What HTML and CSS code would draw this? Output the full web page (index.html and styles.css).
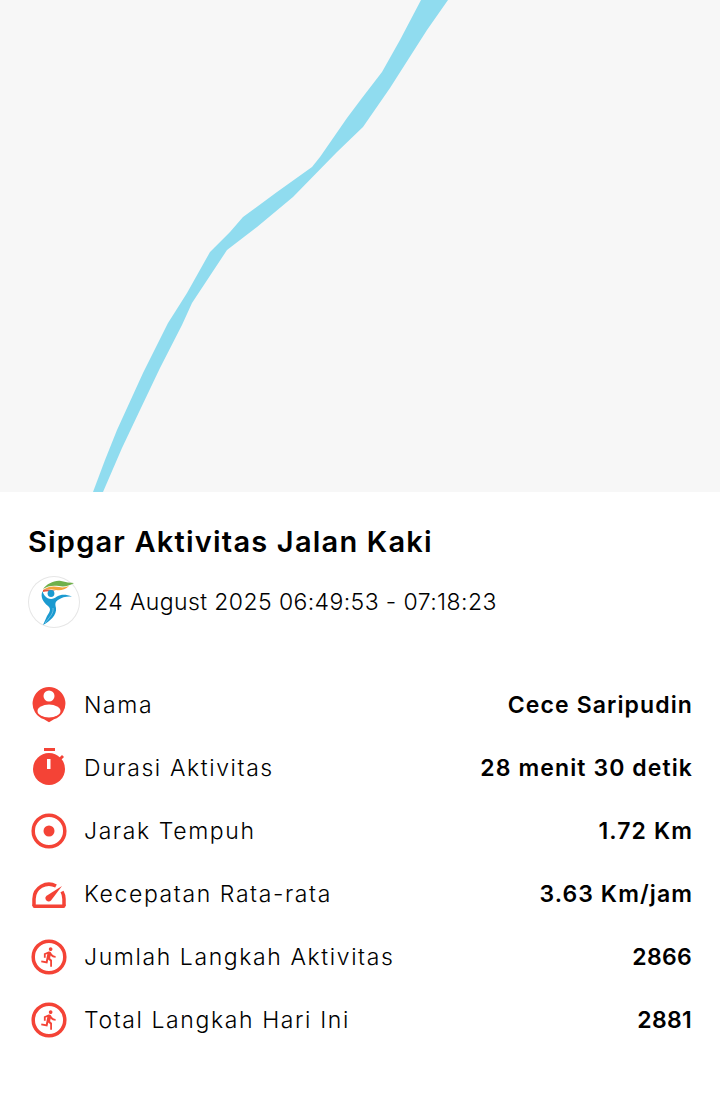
FILE: index.html
```html
<!DOCTYPE html>
<html lang="en">
<head>
    <meta charset="UTF-8">
    <meta name="viewport" content="width=device-width, initial-scale=1.0">
    <title>Sipgar Aktivitas Jalan Kaki</title>
    <link rel="stylesheet" href="styles.css">
</head>
<body>
    <div class="map">
        <svg class="route" width="720" height="492" viewBox="0 0 720 492">
            <polygon points="421,0 400,40 382,72 362,98 347,118 320,157 312,167 277,192 243,217 230,232 215,247 210,252 187,293 175,312 168,323 143,373 117,430 105,460 93,492 103,492 122,448 140,410 160,368 182,325 192,303 227,250 257,227 293,197 337,152 363,127 390,88 397,77 427,30 448,0"/>
        </svg>
    </div>

    <div class="panel">
        <h1 class="title">Sipgar Aktivitas Jalan Kaki</h1>

        <div class="meta">
            <div class="logo">
                <svg width="52" height="52" viewBox="0 0 52 52">
                    <path fill="#6fb04a" d="M15 13C19 8 26 4 33 5C38 6 42 7 46 7C41 10 36 11 31 10C25 9 19 10 15 13z"/>
                    <path fill="#f2a33a" d="M15 14C20 10 26 10 31 11C35 12 38 11 41 10C37 14 32 15 28 14C23 13 19 13 15 14z"/>
                    <path fill="#e4573d" d="M15 14C19 13 24 14 28 15C23 15 18 15 15 16z"/>
                    <circle cx="23" cy="17.500" r="3.400" fill="#1b9ad0"/>
                    <path fill="#1b9ad0" d="M14.500 15C12 21 15 26 20 30C24 33 21 37 19 40L15 49C22 45 29 39 28 32C27 28 27 26 30 24C34 21 39 20 44 20.500C38 18 33 18 29 20.500C25 24 20 23.500 17 20C15.500 18 15 17 14.500 15z"/>
                    <path fill="none" stroke="#8fd0ea" stroke-width=".7" d="M17 47C21 42 26 37 25 32"/>
                </svg>
            </div>
            <span class="date">24 August 2025 06:49:53 - 07:18:23</span>
        </div>

        <div class="stats">
            <div class="row">
                <svg class="icon" width="36" height="36" viewBox="0 0 36 36">
                    <path fill="#f44336" d="M18 0a16.500 16.500 0 0 1 5 32.200l-5 3-5-3A16.500 16.500 0 0 1 18 0z"/>
                    <circle cx="18" cy="9" r="5.500" fill="#fff"/>
                    <ellipse cx="18" cy="24" rx="11.500" ry="6.500" fill="#fff"/>
                </svg>
                <span class="label">Nama</span>
                <span class="value">Cece Saripudin</span>
            </div>
            <div class="row">
                <svg class="icon" width="36" height="40" viewBox="0 0 36 40">
                    <rect x="13" y="0" width="11" height="3" fill="#f44336"/>
                    <circle cx="18" cy="21" r="16" fill="#f44336"/>
                    <path d="M28 10l3-3 2 2-3 3z" fill="#f44336"/>
                    <rect x="16" y="11" width="3.500" height="10" fill="#fff"/>
                </svg>
                <span class="label">Durasi Aktivitas</span>
                <span class="value">28 menit 30 detik</span>
            </div>
            <div class="row">
                <svg class="icon" width="36" height="36" viewBox="0 0 36 36">
                    <circle cx="18" cy="18" r="15.800" fill="none" stroke="#f44336" stroke-width="3.500"/>
                    <circle cx="18" cy="18" r="5.500" fill="#f44336"/>
                </svg>
                <span class="label">Jarak Tempuh</span>
                <span class="value">1.72 Km</span>
            </div>
            <div class="row">
                <svg class="icon" width="36" height="28" viewBox="0 0 36 28">
                    <path fill="none" stroke="#f44336" stroke-width="3.500" d="M3 26v-7A15 15 0 0 1 25 6M31 11.500A15 15 0 0 1 33 19v7"/>
                    <path fill="#f44336" d="M1.500 24.500h33V26a2 2 0 0 1-2 2h-29a2 2 0 0 1-2-2z"/>
                    <path fill="#f44336" d="M31 6L20 20.500a3.300 3.300 0 0 1-5-.5 3.300 3.300 0 0 1 1-4.500z"/>
                </svg>
                <span class="label">Kecepatan Rata-rata</span>
                <span class="value">3.63 Km/jam</span>
            </div>
            <div class="row">
                <svg class="icon" width="36" height="36" viewBox="0 0 36 36">
                    <circle cx="18" cy="18" r="15.800" fill="none" stroke="#f44336" stroke-width="3.500"/>
                    <path transform="translate(7.500 7) scale(.9)" fill="#f44336" d="M13.490 5.480c1.100 0 2-.9 2-2s-.9-2-2-2-2 .9-2 2 .9 2 2 2zm-3.600 13.900l1-4.400 2.100 2v6h2v-7.500l-2.100-2 .6-3c1.300 1.500 3.300 2.500 5.500 2.500v-2c-1.900 0-3.500-1-4.300-2.400l-1-1.600c-.4-.6-1-1-1.700-1-.3 0-.5.1-.8.1l-5.200 2.200v4.700h2v-3.400l1.800-.7-1.600 8.100-4.900-1-.4 2 7 1.400z"/>
                </svg>
                <span class="label">Jumlah Langkah Aktivitas</span>
                <span class="value number">2866</span>
            </div>
            <div class="row">
                <svg class="icon" width="36" height="36" viewBox="0 0 36 36">
                    <circle cx="18" cy="18" r="15.800" fill="none" stroke="#f44336" stroke-width="3.500"/>
                    <path transform="translate(7.500 7) scale(.9)" fill="#f44336" d="M13.490 5.480c1.100 0 2-.9 2-2s-.9-2-2-2-2 .9-2 2 .9 2 2 2zm-3.600 13.900l1-4.400 2.100 2v6h2v-7.500l-2.100-2 .6-3c1.300 1.500 3.300 2.500 5.500 2.500v-2c-1.900 0-3.500-1-4.300-2.400l-1-1.600c-.4-.6-1-1-1.700-1-.3 0-.5.1-.8.1l-5.200 2.200v4.700h2v-3.400l1.800-.7-1.600 8.100-4.900-1-.4 2 7 1.400z"/>
                </svg>
                <span class="label">Total Langkah Hari Ini</span>
                <span class="value number">2881</span>
            </div>
        </div>
    </div>
</body>
</html>
```

FILE: styles.css
```css
body {
    margin: 0;
    font-family: 'Inter', 'Open Sans', sans-serif;
    color: #000;
    background-color: #fff;
}
.map {
    height: 492px;
    background-color: #f7f7f7;
    overflow: hidden;
}
.route {
    display: block;
}
.route polygon {
    fill: #90dcef;
}
.panel {
    padding: 32px 28px 0;
}
.title {
    margin: 0;
    font-size: 29px;
    line-height: 36px;
    font-weight: 600;
    letter-spacing: 1.2px;
}
.meta {
    margin-top: 16px;
    display: flex;
    align-items: center;
    gap: 14px;
}
.logo {
    width: 52px;
    height: 52px;
    border-radius: 50%;
    box-shadow: inset 0 0 0 1px #e6e6e6;
}
.logo svg {
    display: block;
}
.date {
    font-size: 23px;
    font-weight: 300;
    letter-spacing: 0.4px;
}
.stats {
    margin-top: 45px;
}
.row {
    height: 63px;
    display: flex;
    align-items: center;
}
.icon {
    width: 36px;
    margin-left: 3px;
    margin-right: 17px;
    flex-shrink: 0;
}
.label {
    font-size: 23px;
    font-weight: 300;
    letter-spacing: 1.6px;
}
.value {
    margin-left: auto;
    margin-right: -1px;
    font-size: 23px;
    font-weight: 600;
    letter-spacing: 1.1px;
}
.value.number {
    margin-right: 0;
    letter-spacing: 0.3px;
}
```
